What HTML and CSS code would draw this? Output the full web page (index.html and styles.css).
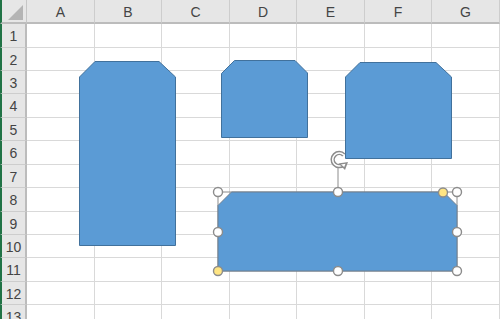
FILE: index.html
```html
<!DOCTYPE html>
<html lang="ja">
<head>
  <meta charset="UTF-8" />
  <title>Sheet1</title>
  <link rel="stylesheet" href="styles.css">
</head>
<body>
  <div class="sheet">
    <div class="grid">
      <div class="corner"><span class="corner-mark"></span></div>
      <div class="col-head">A</div>
      <div class="col-head">B</div>
      <div class="col-head">C</div>
      <div class="col-head">D</div>
      <div class="col-head">E</div>
      <div class="col-head">F</div>
      <div class="col-head">G</div>

      <div class="row-head">1</div><div class="cell"></div><div class="cell"></div><div class="cell"></div><div class="cell"></div><div class="cell"></div><div class="cell"></div><div class="cell"></div>
      <div class="row-head">2</div><div class="cell"></div><div class="cell"></div><div class="cell"></div><div class="cell"></div><div class="cell"></div><div class="cell"></div><div class="cell"></div>
      <div class="row-head">3</div><div class="cell"></div><div class="cell"></div><div class="cell"></div><div class="cell"></div><div class="cell"></div><div class="cell"></div><div class="cell"></div>
      <div class="row-head">4</div><div class="cell"></div><div class="cell"></div><div class="cell"></div><div class="cell"></div><div class="cell"></div><div class="cell"></div><div class="cell"></div>
      <div class="row-head">5</div><div class="cell"></div><div class="cell"></div><div class="cell"></div><div class="cell"></div><div class="cell"></div><div class="cell"></div><div class="cell"></div>
      <div class="row-head">6</div><div class="cell"></div><div class="cell"></div><div class="cell"></div><div class="cell"></div><div class="cell"></div><div class="cell"></div><div class="cell"></div>
      <div class="row-head">7</div><div class="cell"></div><div class="cell"></div><div class="cell"></div><div class="cell"></div><div class="cell"></div><div class="cell"></div><div class="cell"></div>
      <div class="row-head">8</div><div class="cell"></div><div class="cell"></div><div class="cell"></div><div class="cell"></div><div class="cell"></div><div class="cell"></div><div class="cell"></div>
      <div class="row-head">9</div><div class="cell"></div><div class="cell"></div><div class="cell"></div><div class="cell"></div><div class="cell"></div><div class="cell"></div><div class="cell"></div>
      <div class="row-head">10</div><div class="cell"></div><div class="cell"></div><div class="cell"></div><div class="cell"></div><div class="cell"></div><div class="cell"></div><div class="cell"></div>
      <div class="row-head">11</div><div class="cell"></div><div class="cell"></div><div class="cell"></div><div class="cell"></div><div class="cell"></div><div class="cell"></div><div class="cell"></div>
      <div class="row-head">12</div><div class="cell"></div><div class="cell"></div><div class="cell"></div><div class="cell"></div><div class="cell"></div><div class="cell"></div><div class="cell"></div>
      <div class="row-head">13</div><div class="cell"></div><div class="cell"></div><div class="cell"></div><div class="cell"></div><div class="cell"></div><div class="cell"></div><div class="cell"></div>
    </div>

    <!-- shapes drawn over the cells -->
    <svg class="shapes" width="500" height="319" viewBox="0 0 500 319">
      <polygon class="snip" points="79.5,77 95,61.5 159,61.5 175.5,77 175.5,245.5 79.5,245.5" />
      <polygon class="snip" points="221.5,73.5 234.5,60.5 295,60.5 307.5,73 307.5,137.5 221.5,137.5" />
      <polygon class="snip" points="345.5,77 360,62.5 436,62.5 451.5,77 451.5,158.5 345.5,158.5" />

      <!-- selected shape -->
      <rect class="frame" x="218" y="192" width="239" height="79" />
      <polygon class="snip selected" points="218,205.5 231.5,192 443.5,192 457,205.5 457,271 218,271" />

      <!-- rotate handle -->
      <line class="frame-line" x1="338" y1="167" x2="338" y2="187" />
      <path class="rot-outer" d="M343.5 164.5 A6.5 6.5 0 1 1 343.8 155" />
      <path class="rot-inner" d="M343.5 164.5 A6.5 6.5 0 1 1 343.8 155" />
      <polygon class="rot-head" points="338.5,163.5 348,162 345,170" />
      <polygon class="rot-gap" points="341,164.5 345.5,163.8 344.2,167" />

      <circle class="handle" cx="338" cy="192" r="4.5" />
      <circle class="handle" cx="457" cy="192" r="4.5" />
      <circle class="handle" cx="218" cy="192" r="4.5" />
      <circle class="handle" cx="218" cy="232" r="4.5" />
      <circle class="handle" cx="457" cy="232" r="4.5" />
      <circle class="handle" cx="338" cy="271" r="4.5" />
      <circle class="handle" cx="457" cy="271" r="4.5" />
      <circle class="handle adjust" cx="443" cy="192.5" r="4.5" />
      <circle class="handle adjust" cx="218" cy="271" r="4.5" />
    </svg>
  </div>
</body>
</html>
```

FILE: styles.css
```css
* {
  box-sizing: border-box;
}

body {
  margin: 0;
  background: #fff;
  font-family: "Liberation Sans", Arial, sans-serif;
  overflow: hidden;
}

.sheet {
  position: relative;
  width: 500px;
  height: 319px;
  overflow: hidden;
}

.grid {
  display: grid;
  grid-template-columns: 27px 68px 67px 68px 67px 68px 67px 68px;
  grid-template-rows: 24px 24px 23px 23px 24px 23px 24px 23px 24px 23px 23px 24px 23px 23px;
}

.corner,
.col-head,
.row-head {
  background: #e6e6e6;
  color: #444;
  font-size: 14px;
  display: flex;
  align-items: center;
  justify-content: center;
}

.corner {
  position: relative;
  border-left: 2px solid #217346;
  border-right: 1px solid #c6c6c6;
  border-bottom: 2px solid #bcbcbc;
}

.corner-mark {
  position: absolute;
  right: 3px;
  bottom: 2px;
  width: 0;
  height: 0;
  border-left: 15px solid transparent;
  border-bottom: 15px solid #b4b4b4;
}

.col-head {
  border-right: 1px solid #cdcdcd;
  border-bottom: 2px solid #bcbcbc;
  padding-top: 1px;
}

.row-head {
  border-left: 2px solid #217346;
  border-right: 2px solid #bcbcbc;
  border-bottom: 1px solid #cdcdcd;
  padding-top: 1px;
}

.cell {
  border-right: 1px solid #d9d9d9;
  border-bottom: 1px solid #d9d9d9;
}

.shapes {
  position: absolute;
  left: 0;
  top: 0;
}

.snip {
  fill: #5b9bd5;
  stroke: #41719c;
  stroke-width: 1;
}

.snip.selected {
  stroke: #6f7f8f;
}

.frame {
  fill: none;
  stroke: #8c8c8c;
  stroke-width: 1;
}

.frame-line {
  stroke: #8c8c8c;
  stroke-width: 1;
}

.rot-outer {
  fill: none;
  stroke: #8c8c8c;
  stroke-width: 4.5;
}

.rot-inner {
  fill: none;
  stroke: #fff;
  stroke-width: 1.5;
}

.rot-head {
  fill: #8c8c8c;
}

.rot-gap {
  fill: #fff;
}

.handle {
  fill: #fff;
  stroke: #8c8c8c;
  stroke-width: 1.4;
}

.handle.adjust {
  fill: #ffe583;
}
```
